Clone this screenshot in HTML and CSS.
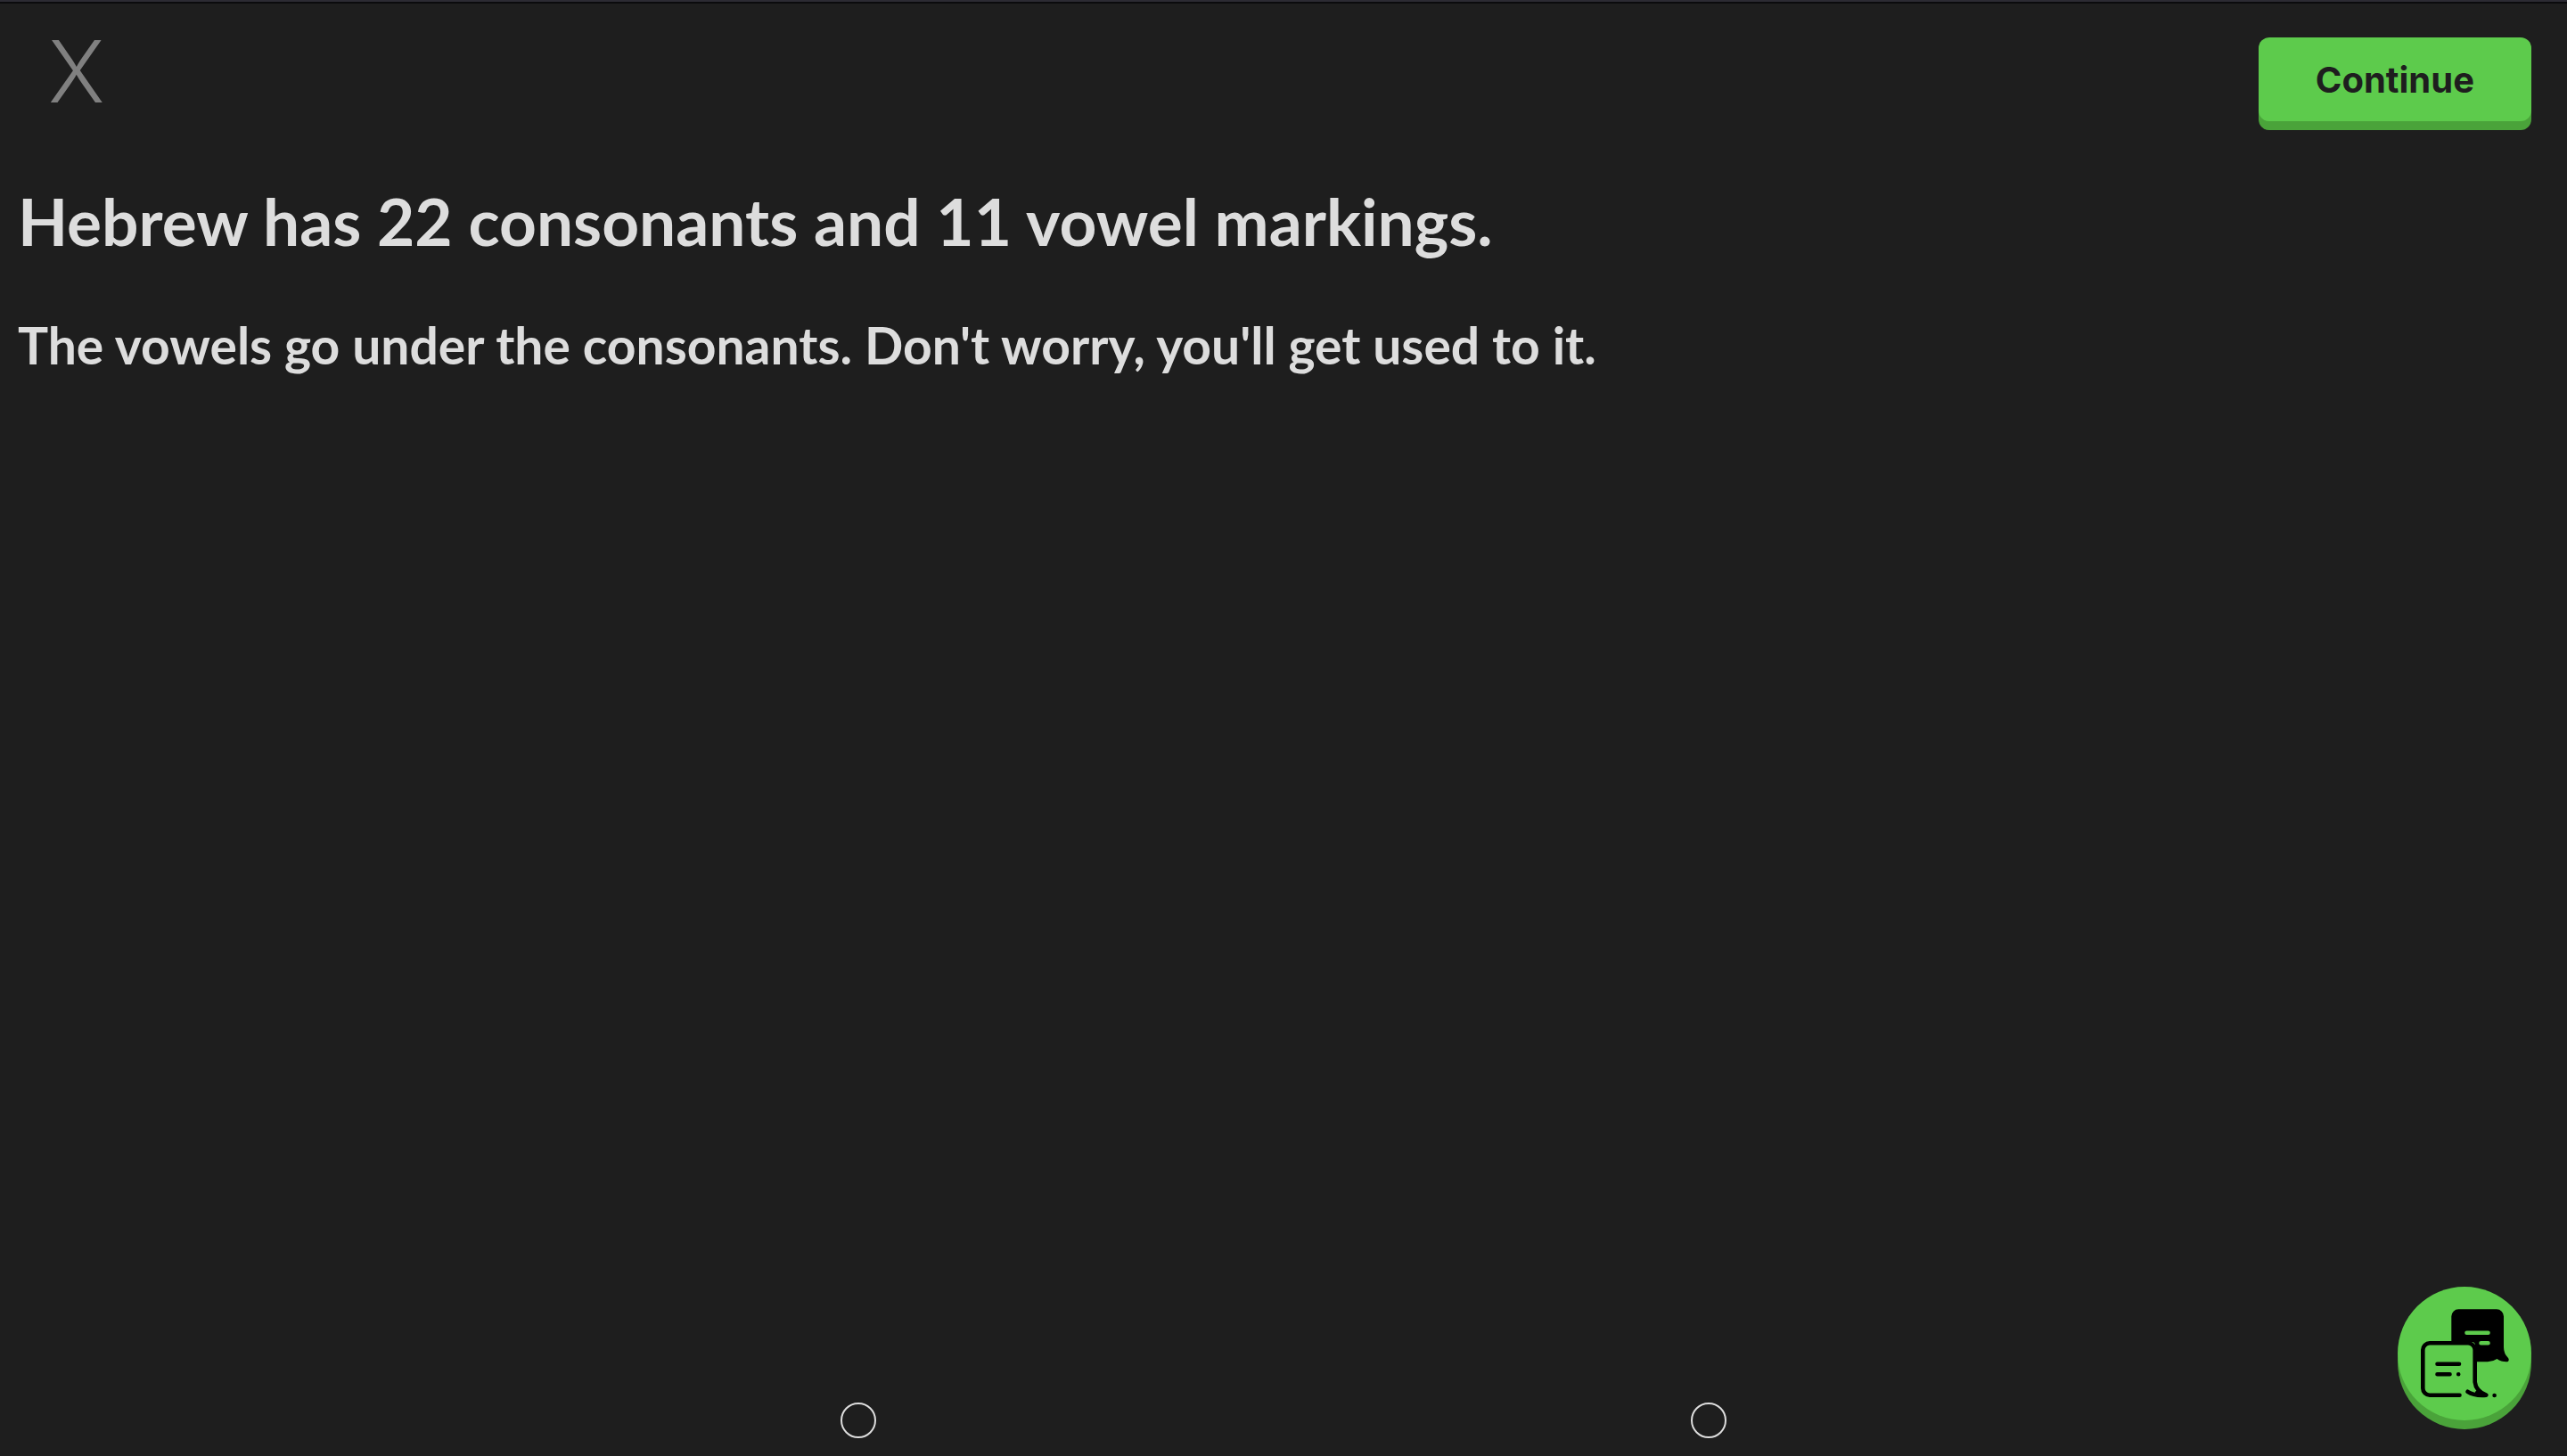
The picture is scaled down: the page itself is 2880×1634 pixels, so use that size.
FILE: index.html
```html
<!DOCTYPE html>
<html lang="en">
<head>
<meta charset="utf-8">
<meta name="viewport" content="width=device-width, initial-scale=1">
<title>Hebrew lesson</title>
<link rel="stylesheet" href="styles.css">
</head>
<body>
<div class="lesson">
  <header class="topbar">
    <button class="close" type="button">X</button>
    <button class="continue" type="button">Continue</button>
  </header>
  <main class="content">
    <h1 class="title">Hebrew has 22 consonants and 11 vowel markings.</h1>
    <p class="note">The vowels go under the consonants. Don't worry, you'll get used to it.</p>
  </main>
  <footer class="steps">
    <span class="step"></span>
    <span class="step"></span>
  </footer>
</div>
<button class="chat" type="button" aria-label="Chat">
  <svg class="chat-icon" viewBox="0 0 100 100" aria-hidden="true">
    <path d="M43 .3H86a8 8 0 0 1 8 8V43q0 7 5 12c1.500 2 .5 4.300-2 4.300q-6 0-10.500-3.300q-5 3.300-10.500 3.300H62V41q0-4-4-4H35.300V8.300a8 8 0 0 1 8-8z"/>
    <g fill="none" stroke="#000" stroke-width="4.6" stroke-linecap="round" stroke-linejoin="round">
      <path d="M44.500 96.700H11a7.700 7.700 0 0 1-7.700-7.700V46a7.700 7.700 0 0 1 7.700-7.700H54a7.700 7.700 0 0 1 7.700 7.700V82q1 10 12.600 14.700q-13.500 1-20.700-3.900" />
      <path d="M64 94l9 2.500" />
      <path d="M19.500 61.700H44M19.500 73.300H33.500M43.200 73.300h0M83.600 97h0"/>
      <path stroke="#5dcb4c" d="M52.500 26.700h24M68.500 38.300h8"/>
    </g>
  </svg>
</button>
</body>
</html>
```
FILE: styles.css
```css
* { box-sizing: border-box; }

body {
  margin: 0;
  background: #1e1e1e;
  color: #dddddd;
  font-family: Lato, sans-serif;
}

button {
  margin: 0;
  border: 0;
  cursor: pointer;
}

.lesson {
  display: flex;
  flex-direction: column;
  min-height: 100vh;
  border-top: 2px solid #2c2b33;
  box-shadow: inset 0 2px #0b0b0d;
}

.topbar {
  display: flex;
  justify-content: space-between;
  align-items: flex-start;
  padding: 20px 40px 0 54px;
}

.close {
  padding: 0;
  background: none;
  color: #808080;
  font: 300 96px/116px Inter, sans-serif;
}

.continue {
  margin-top: 20px;
  padding: 2px 64px 0;
  border-radius: 12px;
  background: #5dcb4c;
  box-shadow: 0 10px #4aa33a;
  color: #1e1e1e;
  font: 700 40px/92px Inter, sans-serif;
}

.content {
  flex: 1;
  padding: 66px 20px 0;
}

.title {
  margin: 0;
  font-size: 73px;
  font-weight: 700;
  line-height: 88px;
}

.note {
  margin: 60px 0 0;
  font-size: 57px;
  font-weight: 700;
  line-height: 70px;
}

.steps {
  display: flex;
  justify-content: space-evenly;
  padding: 0 29px 20px;
}

.step {
  width: 40px;
  height: 40px;
  border: 2px solid #dddddd;
  border-radius: 50%;
}

.chat {
  position: fixed;
  right: 40px;
  bottom: 40px;
  display: grid;
  place-items: center;
  width: 150px;
  height: 150px;
  padding: 0;
  border-radius: 50%;
  background: #5dcb4c;
  box-shadow: 0 10px #4aa33a;
}

.chat-icon {
  width: 100px;
  height: 100px;
}
```
